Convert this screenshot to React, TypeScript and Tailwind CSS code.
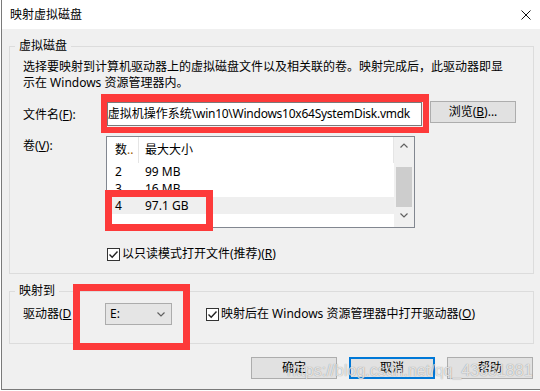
import React from "react";

const RedBox = ({ className }: { className: string }) => (
  <div className={`pointer-events-none absolute border-[#fd3a3a] ${className}`} />
);

const Check = () => (
  <div className="flex h-[13px] w-[13px] shrink-0 items-center justify-center border border-[#333] bg-white">
    <svg width="11" height="11" viewBox="0 0 11 11">
      <path d="M1.5 5.5 L4.2 8.2 L9.5 2.5" fill="none" stroke="#222" strokeWidth="1.4" />
    </svg>
  </div>
);

const Chevron = ({ up }: { up?: boolean }) => (
  <svg width="8" height="5" viewBox="0 0 8 5">
    <polyline
      points={up ? "0.5,4.5 4,1 7.5,4.5" : "0.5,0.5 4,4 7.5,0.5"}
      fill="none"
      stroke="#606060"
      strokeWidth="1.2"
    />
  </svg>
);

const WinButton = ({ children, focus }: { children: React.ReactNode; focus?: boolean }) => (
  <div
    className={`flex h-[22px] w-[86px] items-center justify-center bg-[#e1e1e1] text-[12px] leading-[14px] ${
      focus ? "border-2 border-[#0078d7]" : "border border-[#adadad]"
    }`}
  >
    {children}
  </div>
);

const rows = [
  { n: "2", size: "99 MB" },
  { n: "3", size: "16 MB" },
  { n: "4", size: "97.1 GB", selected: true },
];

export default function App() {
  return (
    <div className="relative h-[391px] w-[540px] overflow-hidden bg-white pl-[1px] font-['Noto_Sans','Noto_Sans_CJK_SC',sans-serif] text-black">
      <div className="h-[390px] border-b border-l border-[#7a7a7a]">
        {/* title bar */}
        <div className="flex h-[29px] items-center justify-between bg-white pl-[8px] pr-[9px]">
          <span className="text-[12px] leading-[14px]">映射虚拟磁盘</span>
          <svg width="10" height="10" viewBox="0 0 10 10">
            <path d="M0.5 0.5 L9.5 9.5 M9.5 0.5 L0.5 9.5" stroke="#111" strokeWidth="1" />
          </svg>
        </div>

        <div className="flex h-[360px] flex-col bg-[#f0f0f0]">
          {/* 虚拟磁盘 */}
          <fieldset className="ml-[7px] mr-[6px] mt-[10px] border border-[#dcdcdc] p-0">
            <legend className="ml-[5px] px-[4px] text-[12px] leading-[14px]">虚拟磁盘</legend>
            <div className="pb-[11px] pl-[13px] pt-[6px] text-[12px]">
              <div className="whitespace-nowrap leading-[16px]">
                选择要映射到计算机驱动器上的虚拟磁盘文件以及相关联的卷。映射完成后，此驱动器即显
              </div>
              <div className="whitespace-nowrap leading-[16px]">示在 Windows 资源管理器内。</div>

              <div className="mt-[10px] flex items-start">
                <div className="mt-[7px] w-[84px] leading-[14px]">
                  文件名(<span className="underline underline-offset-[1px]">F</span>):
                </div>
                <div className="relative mt-[1px]">
                  <div className="flex h-[24px] w-[315px] items-center justify-end overflow-hidden border border-[#7a7a7a] bg-white pr-[11px]">
                    <span className="whitespace-nowrap leading-[14px]">
                      虚拟机操作系统
                      <span className="tracking-[-0.25px]">\win10\Windows10x64SystemDisk.vmdk</span>
                    </span>
                  </div>
                  <RedBox className="-left-[6px] -top-[8px] h-[39px] w-[328px] border-b-[6px] border-x-[6px] border-t-[8px]" />
                </div>
                <div className="ml-[8px]">
                  <WinButton>
                    浏览(<span className="underline underline-offset-[1px]">B</span>)...
                  </WinButton>
                </div>
              </div>

              <div className="mt-[10px] flex items-start">
                <div className="mt-[3px] w-[83px] leading-[14px]">
                  卷(<span className="underline underline-offset-[1px]">V</span>):
                </div>
                <div className="relative">
                  <div className="flex h-[92px] w-[309px] border border-[#828790] bg-white">
                    <div className="flex w-[287px] flex-col">
                      <div className="flex h-[26px] items-center leading-[14px]">
                        <div className="flex h-full w-[32px] items-center border-r border-[#e5e5e5] pl-[8px]">
                          数<span className="text-[#a05a00]">..</span>
                        </div>
                        <div className="flex h-full flex-1 items-center border-r border-[#e5e5e5] pl-[6px]">
                          最大大小
                        </div>
                      </div>
                      {rows.map((r) => (
                        <div
                          key={r.n}
                          className={`flex h-[17px] items-center leading-[14px] ${
                            r.selected ? "bg-[#efefef]" : ""
                          }`}
                        >
                          <div className="w-[32px] pl-[8px]">{r.n}</div>
                          <div className="pl-[6px]">{r.size}</div>
                        </div>
                      ))}
                    </div>
                    <div className="flex w-[20px] flex-col items-center bg-[#f0f0f0]">
                      <div className="flex h-[17px] items-center justify-center">
                        <Chevron up />
                      </div>
                      <div className="mt-[13px] h-[40px] w-[16px] bg-[#cdcdcd]" />
                      <div className="flex h-[17px] items-center justify-center">
                        <Chevron />
                      </div>
                    </div>
                  </div>
                  <RedBox className="-left-[1px] top-[54px] h-[41px] w-[108px] border-[7px]" />
                </div>
              </div>

              <div className="mt-[18px] flex items-center pl-[84px] leading-[16px]">
                <Check />
                <span className="ml-[2px]">
                  以只读模式打开文件(推荐)(<span className="underline underline-offset-[1px]">R</span>)
                </span>
              </div>
            </div>
          </fieldset>

          {/* 映射到 */}
          <fieldset className="ml-[7px] mr-[6px] mt-[10px] border border-[#dcdcdc] p-0">
            <legend className="ml-[5px] px-[4px] text-[12px] leading-[14px]">映射到</legend>
            <div className="flex items-center pb-[18px] pl-[13px] pt-[5px] text-[12px] leading-[14px]">
              <div className="w-[82px] whitespace-nowrap">
                驱动器(<span className="underline underline-offset-[1px]">D</span>
              </div>
              <div className="relative">
                <div className="flex h-[22px] w-[67px] items-center justify-between border border-[#acacac] bg-[#e5e5e5] pl-[4px] pr-[6px]">
                  <span>E:</span>
                  <Chevron />
                </div>
                <RedBox className="-left-[32px] -top-[19px] h-[66px] w-[117px] border-[7px]" />
              </div>
              <div className="ml-[34px] flex items-center">
                <Check />
                <span className="ml-[2px] whitespace-nowrap">
                  映射后在 Windows 资源管理器中打开驱动器(
                  <span className="underline underline-offset-[1px]">O</span>)
                </span>
              </div>
            </div>
          </fieldset>

          <div className="mr-[7px] mt-[13px] flex justify-end gap-[12px]">
            <WinButton>确定</WinButton>
            <WinButton focus>取消</WinButton>
            <WinButton>帮助</WinButton>
          </div>
        </div>
      </div>

      <div className="pointer-events-none absolute left-[287px] top-[361px] whitespace-nowrap font-['Liberation_Sans',Arial,sans-serif] text-[16px] leading-[20px] text-white/75 [text-shadow:0_0_1px_rgba(0,0,0,0.45)]">
        https://blog.csdn.net/qq_43331881
      </div>
    </div>
  );
}
